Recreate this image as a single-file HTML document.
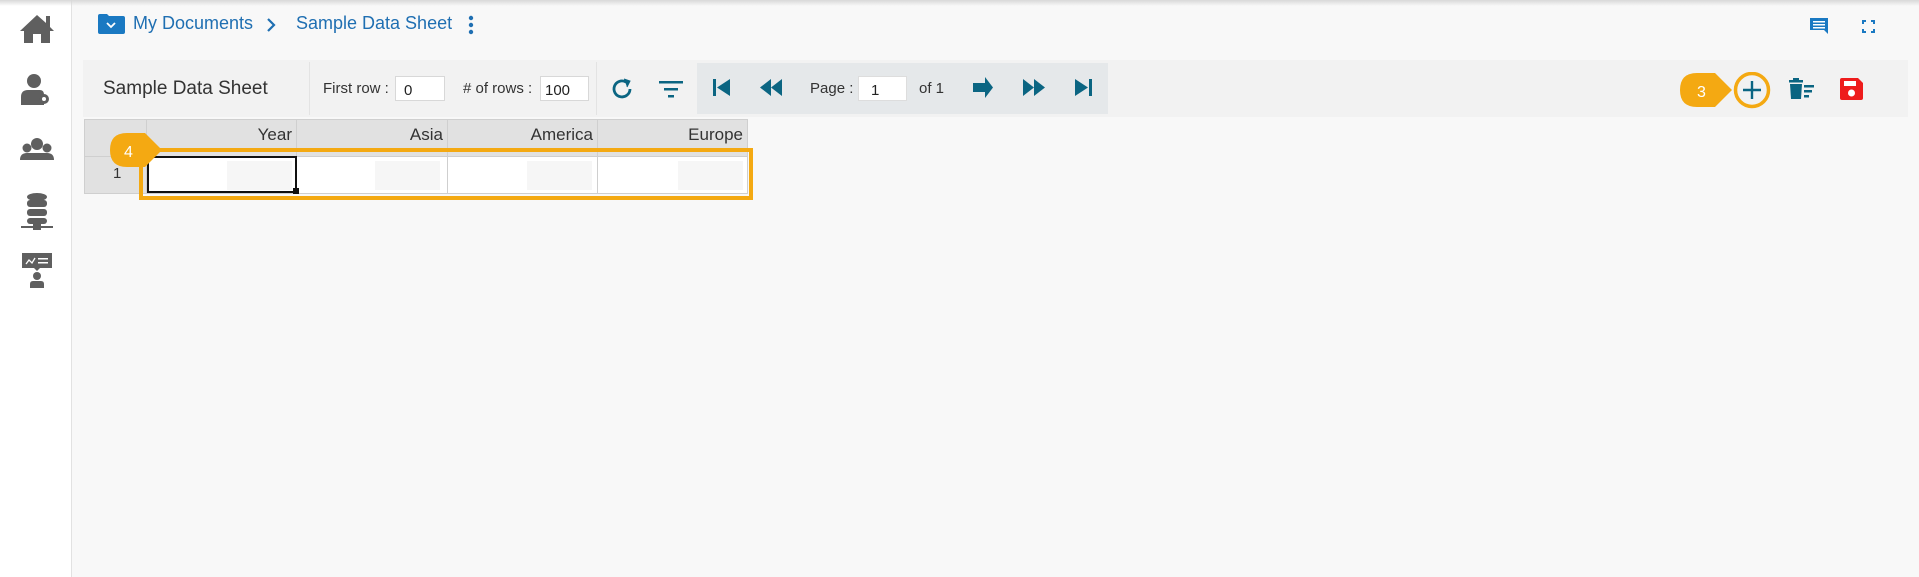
<!DOCTYPE html>
<html><head><meta charset="utf-8"><style>
*{margin:0;padding:0;box-sizing:border-box}
body{width:1919px;height:577px;background:#f8f8f8;font-family:"Liberation Sans",sans-serif;position:relative;overflow:hidden}
.a{position:absolute}
.side{left:0;top:0;width:72px;height:577px;background:#fff;border-right:1px solid #e2e2e2}
.shadow{left:0;top:0;width:1919px;height:6px;background:linear-gradient(#d8d8d8,rgba(248,248,248,0))}
.t{position:absolute;white-space:nowrap}
.inp{position:absolute;background:#fff;border:1px solid #d8d8d8;font-size:15px;color:#222;padding:5px 0 0 8px}
.cell{position:absolute;border-right:1px solid #cfcfcf;border-bottom:1px solid #cfcfcf}
.hd{background:#e1e1e1;font-size:17px;color:#333;text-align:right;padding:5px 4px 0 0}
</style></head><body>
<div class="a side"></div>
<div class="a shadow"></div>
<svg class="a" style="left:0;top:0" width="72" height="300" viewBox="0 0 72 300" fill="#5f5f5f">
<path d="M20 31 L37 15 L46 23 V16 H50 V27 L54 31 H50 V43 H41 V34 H33 V43 H24 V31Z"/>
<circle cx="34" cy="81" r="7"/><path d="M21 105 V97 Q21 90 28 90 H40 Q44 90 44 95 V105Z"/>
<circle cx="44" cy="99" r="5" fill="#5f5f5f"/><circle cx="44" cy="99" r="2" fill="#fff"/>
<circle cx="37" cy="144" r="6"/><circle cx="27" cy="148" r="4.5"/><circle cx="47" cy="148" r="4.5"/>
<path d="M20 160 Q20 153 27 153 H47 Q54 153 54 160Z"/>
<ellipse cx="37" cy="197" rx="10" ry="4"/><rect x="27" y="200" width="20" height="7" rx="3"/><rect x="27" y="209" width="20" height="7" rx="3"/><rect x="27" y="218" width="20" height="6" rx="3"/>
<rect x="35" y="224" width="4" height="4"/><rect x="21" y="226" width="32" height="2"/><rect x="33" y="224" width="8" height="6"/>
<rect x="22" y="253" width="30" height="15"/><path d="M34 268 H40 L37 271Z"/>
<path d="M26 264 l3-4 3 3 3-5" stroke="#fff" stroke-width="1.3" fill="none"/><rect x="38" y="258" width="10" height="1.5" fill="#fff"/><rect x="38" y="262" width="10" height="1.5" fill="#fff"/>
<circle cx="37" cy="276" r="4"/><path d="M30 288 V284 Q30 281 33 281 H41 Q44 281 44 284 V288Z"/>
</svg>
<svg class="a" style="left:98px;top:14px" width="27" height="20" viewBox="0 0 27 20"><path d="M0 2 Q0 0 2 0 H9 L11 2 H25 Q27 2 27 4 V18 Q27 20 25 20 H2 Q0 20 0 18Z" fill="#1a79c2"/><path d="M9 9 l4 4 4-4" stroke="#fff" stroke-width="1.8" fill="none"/></svg>
<div class="t" style="left:133px;top:13px;font-size:18px;color:#1f6fb2">My Documents</div>
<svg class="a" style="left:266px;top:17px" width="10" height="16"><path d="M2 2 L8 8 L2 14" stroke="#1f6fb2" stroke-width="2.2" fill="none"/></svg>
<div class="t" style="left:296px;top:13px;font-size:18px;color:#1f6fb2">Sample Data Sheet</div>
<svg class="a" style="left:468px;top:15px" width="6" height="20" fill="#1f6fb2"><circle cx="3" cy="3" r="2.2"/><circle cx="3" cy="10" r="2.2"/><circle cx="3" cy="17" r="2.2"/></svg>
<svg class="a" style="left:1810px;top:18px" width="19" height="16"><path d="M0 0 H18 V12 H18 V16 L14 12 H0Z" fill="#1a79c2"/><rect x="3" y="3" width="12" height="1.5" fill="#fff"/><rect x="3" y="6" width="12" height="1.5" fill="#fff"/><rect x="3" y="9" width="12" height="1.5" fill="#fff"/></svg>
<svg class="a" style="left:1862px;top:20px" width="13" height="13" stroke="#1a79c2" stroke-width="2" fill="none"><path d="M1 4V1H4M9 1H12V4M12 9V12H9M4 12H1V9"/></svg>
<div class="a" style="left:83px;top:60px;width:1825px;height:57px;background:#f2f2f2"></div>
<div class="a" style="left:309px;top:62px;width:1px;height:53px;background:#e3e3e3"></div>
<div class="a" style="left:596px;top:62px;width:1px;height:53px;background:#e3e3e3"></div>
<div class="t" style="left:103px;top:78px;font-size:19px;color:#333">Sample Data Sheet</div>
<div class="t" style="left:323px;top:80px;font-size:15px;color:#333">First row :</div>
<div class="inp" style="left:395px;top:76px;width:50px;height:25px">0</div>
<div class="t" style="left:463px;top:80px;font-size:15px;color:#333"># of rows :</div>
<div class="inp" style="left:540px;top:76px;width:49px;height:25px;padding-left:4px">100</div>
<svg class="a" style="left:611px;top:78px" width="23" height="22" fill="none" stroke="#0b6582" stroke-width="2.8"><path d="M19 11 A8 8 0 1 1 15 4"/><path d="M13 1 L19 3 L16 9" fill="#0b6582" stroke-width="1"/></svg>
<svg class="a" style="left:659px;top:80px" width="24" height="18" fill="#0b6582"><rect x="0" y="1" width="24" height="2.5"/><rect x="5" y="8" width="14" height="2.5"/><rect x="9" y="15" width="6" height="2.5"/></svg>
<div class="a" style="left:697px;top:63px;width:411px;height:51px;background:#e5e8ea"></div>
<svg class="a" style="left:697px;top:63px" width="411" height="51" fill="#0b6582">
<rect x="16" y="16" width="3" height="17"/><path d="M20 24.5 L33 16 V33Z"/>
<path d="M63 24.5 L74 16 V33Z"/><path d="M74 24.5 L85 16 V33Z"/>
<path d="M276 20 H288 V14 L296 24.5 L288 35 V29 H276Z"/>
<path d="M326 16 L337 24.5 L326 33Z"/><path d="M337 16 L348 24.5 L337 33Z"/>
<path d="M378 16 L391 24.5 L378 33Z"/><rect x="392" y="16" width="3" height="17"/>
</svg>
<div class="t" style="left:810px;top:80px;font-size:15px;color:#333">Page :</div>
<div class="inp" style="left:858px;top:76px;width:49px;height:25px;border-color:#ddd;padding-left:12px">1</div>
<div class="t" style="left:919px;top:80px;font-size:15px;color:#333">of 1</div>
<svg class="a" style="left:1680px;top:72px" width="95" height="37">
<path d="M17 1 H35 L52 18 L35 35 H17 Q0 35 0 18 Q0 1 17 1Z" fill="#f4a912"/>
<text x="17" y="25" font-family="Liberation Sans" font-size="16" fill="#fff">3</text>
<circle cx="72" cy="18" r="16.5" fill="none" stroke="#f4a912" stroke-width="3.5"/>
<path d="M72 9 V27 M63 18 H81" stroke="#0b6582" stroke-width="2.4"/>
</svg>
<svg class="a" style="left:1788px;top:78px" width="28" height="22" fill="#0b6582"><rect x="1" y="2" width="14" height="2.5"/><rect x="5" y="0" width="6" height="2"/><path d="M2 6 H14 L13 21 H3Z"/><rect x="16" y="7" width="10" height="2.5"/><rect x="16" y="12" width="8" height="2.5"/><rect x="16" y="17" width="5" height="2.5"/></svg>
<svg class="a" style="left:1840px;top:78px" width="23" height="22"><path d="M0 2 Q0 0 2 0 H18 L23 5 V20 Q23 22 21 22 H2 Q0 22 0 20Z" fill="#ee1c1c"/><rect x="4" y="3" width="12" height="5" fill="#fff"/><circle cx="11.5" cy="15" r="3.5" fill="#fff"/></svg>
<div class="cell hd" style="left:84px;top:119px;width:63px;height:38px;border-left:1px solid #cfcfcf;border-top:1px solid #cfcfcf"></div>
<div class="cell hd" style="left:147px;top:119px;width:150px;height:38px;border-top:1px solid #cfcfcf">Year</div>
<div class="cell hd" style="left:297px;top:119px;width:151px;height:38px;border-top:1px solid #cfcfcf">Asia</div>
<div class="cell hd" style="left:448px;top:119px;width:150px;height:38px;border-top:1px solid #cfcfcf">America</div>
<div class="cell hd" style="left:598px;top:119px;width:150px;height:38px;border-top:1px solid #cfcfcf">Europe</div>
<div class="cell" style="left:84px;top:157px;width:63px;height:37px;background:#e1e1e1;border-left:1px solid #cfcfcf;font-size:15px;color:#333;padding:8px 0 0 28px">1</div>
<div class="cell" style="left:147px;top:157px;width:150px;height:37px;background:#fff"><div class="a" style="left:80px;top:4px;width:65px;height:29px;background:#f6f6f6"></div></div>
<div class="cell" style="left:297px;top:157px;width:151px;height:37px;background:#fff"><div class="a" style="left:78px;top:4px;width:65px;height:29px;background:#f6f6f6"></div></div>
<div class="cell" style="left:448px;top:157px;width:150px;height:37px;background:#fff"><div class="a" style="left:79px;top:4px;width:65px;height:29px;background:#f6f6f6"></div></div>
<div class="cell" style="left:598px;top:157px;width:150px;height:37px;background:#fff"><div class="a" style="left:80px;top:4px;width:65px;height:29px;background:#f6f6f6"></div></div>
<div class="a" style="left:147px;top:156px;width:150px;height:37px;border:2px solid #111"></div>
<div class="a" style="left:293px;top:188px;width:6px;height:6px;background:#111"></div>
<div class="a" style="left:139px;top:148px;width:614px;height:52px;border:4px solid #f4a912"></div>
<svg class="a" style="left:110px;top:133px" width="52" height="35"><path d="M17 0 H35 L52 17 L35 34 H17 Q0 34 0 17 Q0 0 17 0Z" fill="#f4a912"/><text x="14" y="24" font-family="Liberation Sans" font-size="16" fill="#fff">4</text></svg>
</body></html>
